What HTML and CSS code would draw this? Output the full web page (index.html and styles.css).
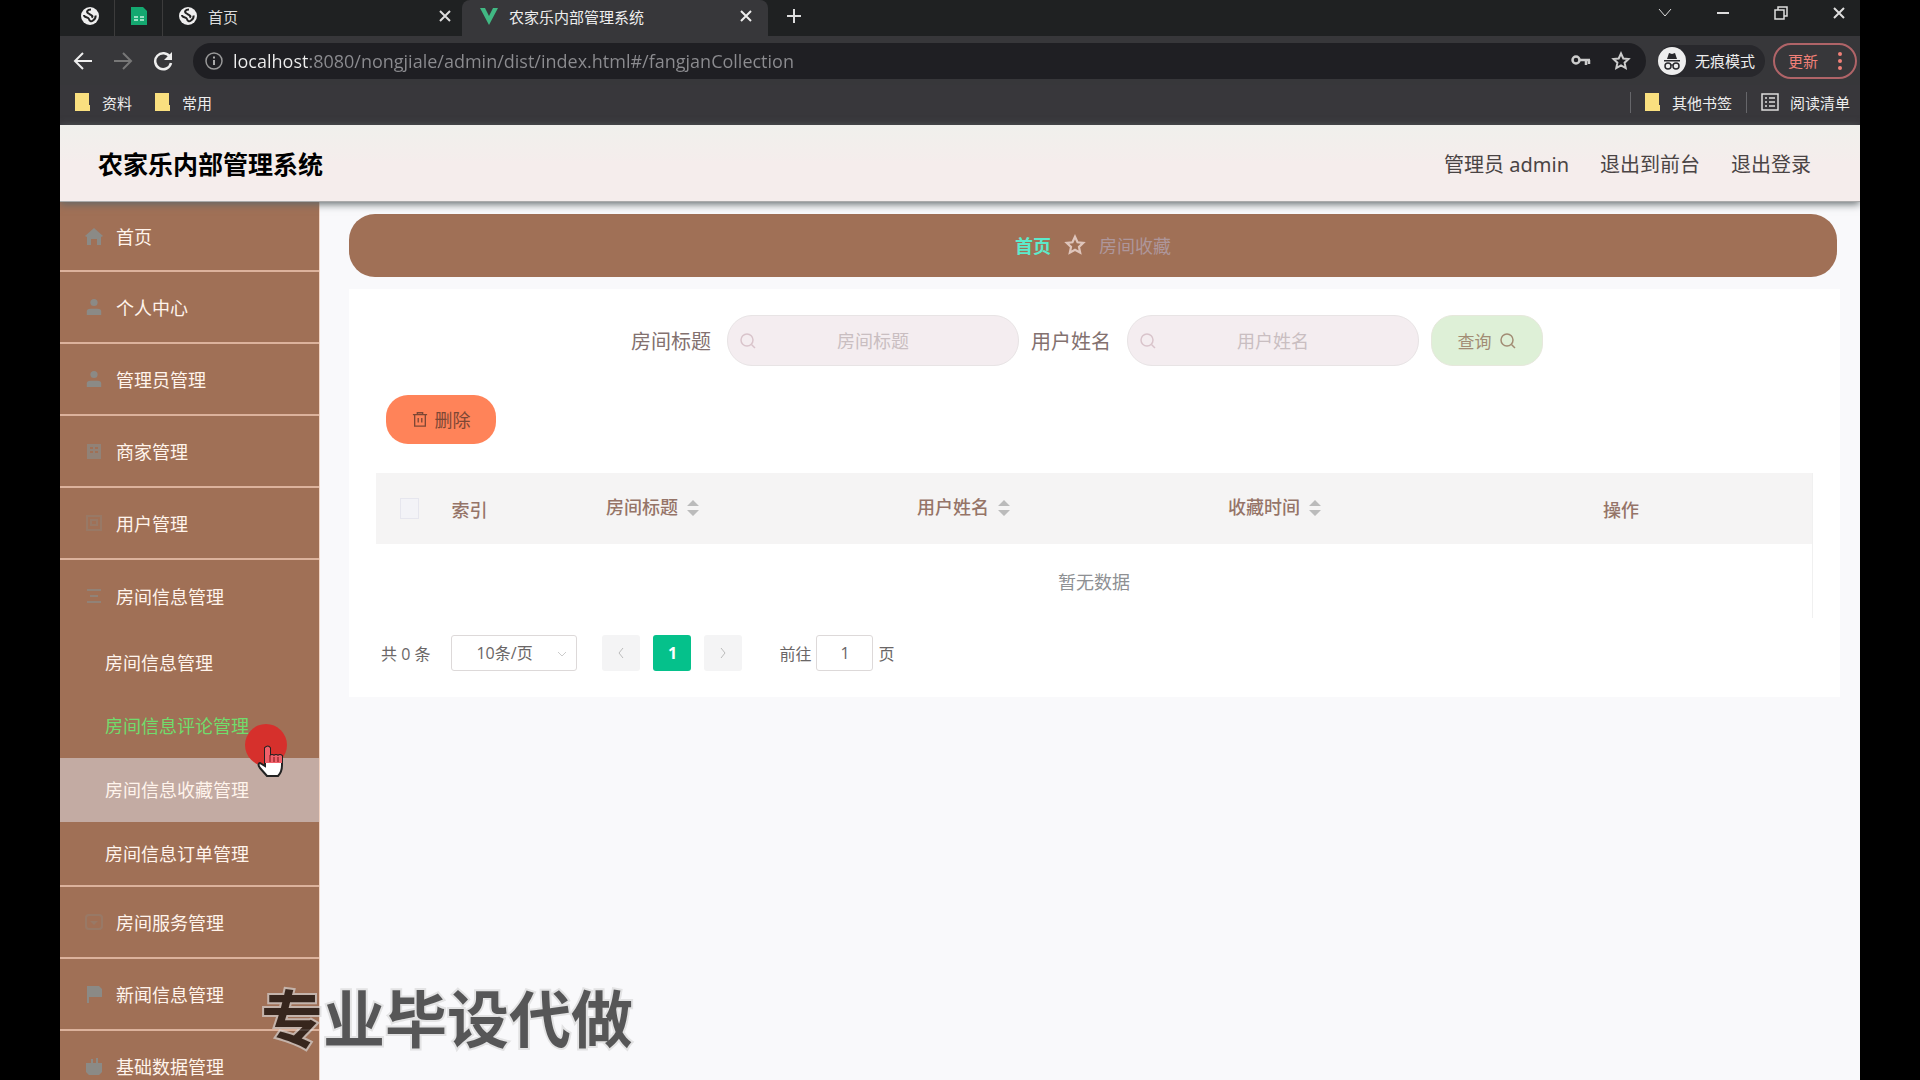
FILE: index.html
```html
<!DOCTYPE html>
<html lang="zh-CN">
<head>
<meta charset="utf-8">
<title>农家乐内部管理系统</title>
<link rel="stylesheet" href="styles.css">
</head>
<body>
<svg class="defs" aria-hidden="true">
  <symbol id="globe" viewBox="0 0 18 18"><circle cx="9" cy="9" r="9" fill="#eee"/><path d="M10 2.500C6 2.500 5 5 7.500 6.500S13 9 10.500 10.500M3 8c0 3 4 1.500 5 4 .500 2 2 3 4 1.500s3-3 2.500-5" fill="none" stroke="#222" stroke-width="2"/></symbol>
  <symbol id="cross" viewBox="0 0 14 14"><path d="M2 2l10 10M12 2L2 12" fill="none" stroke="currentColor" stroke-width="2"/></symbol>
  <symbol id="search" viewBox="0 0 18 18"><circle cx="8" cy="8" r="6" fill="none" stroke="currentColor" stroke-width="1.500"/><path d="M12.500 12.500L16 16" stroke="currentColor" stroke-width="1.500"/></symbol>
  <symbol id="star" viewBox="0 0 20 20"><path d="M10 2.500l2.300 5 5.200.600-3.900 3.600 1.100 5.300L10 14.300 5.300 17l1.100-5.300L2.500 8.100l5.200-.600z" fill="none" stroke="currentColor" stroke-width="2"/></symbol>
  <symbol id="user" viewBox="0 0 18 20"><circle cx="9" cy="5" r="4"/><path d="M1 19v-4q0-3 4-3h8q4 0 4 3v4z"/></symbol>
  <symbol id="folder" viewBox="0 0 15 18"><path d="M0 0h14v12h1v6H0z" fill="#f9df7f"/></symbol>
</svg>

<div class="window">
  <div class="tabs">
    <button class="tab pinned" aria-label="固定标签"><svg class="i18"><use href="#globe"/></svg></button>
    <button class="tab pinned" aria-label="表格"><svg class="i18" viewBox="0 0 18 18"><path d="M1 0h12l4 4v14H1z" fill="#14a870"/><path d="M4 10h4M10 10h4M4 13h4M10 13h4" stroke="#9be0c4" stroke-width="2"/></svg></button>
    <div class="tab inactive"><svg class="i18"><use href="#globe"/></svg><span class="tab-title">首页</span><button aria-label="关闭"><svg class="i14"><use href="#cross"/></svg></button></div>
    <div class="tab active"><svg class="i18" viewBox="0 0 18 18"><path d="M0 1h5l4 8 4-8h5L9 18z" fill="#41b883"/></svg><span class="tab-title">农家乐内部管理系统</span><button aria-label="关闭"><svg class="i14"><use href="#cross"/></svg></button></div>
    <button class="new-tab" aria-label="新标签"><svg class="i16" viewBox="0 0 16 16"><path d="M8 1v14M1 8h14" stroke="currentColor" stroke-width="2"/></svg></button>
    <div class="window-controls">
      <button aria-label="搜索标签"><svg class="i14" viewBox="0 0 14 14"><path d="M1 3l6 7 6-7" fill="none" stroke="currentColor"/></svg></button>
      <button aria-label="最小化"><svg class="i14" viewBox="0 0 14 14"><path d="M1 7h12" stroke="currentColor" stroke-width="2"/></svg></button>
      <button aria-label="还原"><svg class="i14" viewBox="0 0 14 14"><path d="M1 4h9v9H1zM4 4V1h9v9h-3" fill="none" stroke="currentColor" stroke-width="1.500"/></svg></button>
      <button aria-label="关闭窗口"><svg class="i14"><use href="#cross"/></svg></button>
    </div>
  </div>

  <div class="toolbar">
    <button aria-label="后退"><svg class="i20" viewBox="0 0 20 20"><path d="M19 10H2M10 2l-8 8 8 8" fill="none" stroke="#eee" stroke-width="2"/></svg></button>
    <button aria-label="前进"><svg class="i20" viewBox="0 0 20 20"><path d="M1 10h17M10 2l8 8-8 8" fill="none" stroke="#777" stroke-width="2"/></svg></button>
    <button aria-label="刷新"><svg class="i20" viewBox="0 0 20 20"><path d="M17 6a8 8 0 1 0 1 6" fill="none" stroke="#eee" stroke-width="2.500"/><path d="M19 1v8h-8z" fill="#eee"/></svg></button>
    <div class="address">
      <svg class="i18" viewBox="0 0 18 18"><circle cx="9" cy="9" r="8" fill="none" stroke="#999" stroke-width="1.500"/><path d="M9 8v5M9 4.500v2" stroke="#aaa" stroke-width="2"/></svg>
      <input type="text" aria-label="地址" value="localhost:8080/nongjiale/admin/dist/index.html#/fangjanCollection">
      <svg class="i20" viewBox="0 0 20 20"><circle cx="5" cy="9" r="3.500" fill="none" stroke="#ccc" stroke-width="2.500"/><path d="M8 9h11M15 9v5M18 9v4" fill="none" stroke="#ccc" stroke-width="2.500"/></svg>
      <svg class="i20 light"><use href="#star"/></svg>
    </div>
    <div class="incognito"><svg class="i28" viewBox="0 0 28 28"><circle cx="14" cy="14" r="14" fill="#eee"/><path d="M9 12l2-6 3 1 3-1 2 6zM6 13h16v1.500H6z" fill="#28282c"/><circle cx="10" cy="19" r="3" fill="none" stroke="#28282c" stroke-width="1.500"/><circle cx="18" cy="19" r="3" fill="none" stroke="#28282c" stroke-width="1.500"/><path d="M13 18h2" stroke="#28282c"/></svg>无痕模式</div>
    <button class="update">更新<svg class="dots" viewBox="0 0 4 18"><circle cx="2" cy="2" r="2"/><circle cx="2" cy="9" r="2"/><circle cx="2" cy="16" r="2"/></svg></button>
  </div>

  <nav class="bookmarks">
    <a href="#"><svg class="folder"><use href="#folder"/></svg>资料</a>
    <a href="#"><svg class="folder"><use href="#folder"/></svg>常用</a>
    <a href="#" class="divided push"><svg class="folder"><use href="#folder"/></svg>其他书签</a>
    <a href="#" class="divided list"><svg class="i18" viewBox="0 0 18 18"><path d="M1 1h16v16H1zM4 5h2M8 5h6M4 9h2M8 9h6M4 13h2M8 13h6" fill="none" stroke="#ddd" stroke-width="1.500"/></svg>阅读清单</a>
  </nav>

  <header class="header">
    <h1>农家乐内部管理系统</h1>
    <span>管理员 admin</span>
    <a href="#">退出到前台</a>
    <a href="#">退出登录</a>
  </header>

  <div class="body">
    <aside class="sidebar">
      <a href="#" class="item"><svg class="mi" viewBox="0 0 18 18"><path d="M9 1l9 8-2 1v8h-4v-6H6v6H2v-8L0 9z"/></svg>首页</a>
      <a href="#" class="item"><svg class="mi"><use href="#user"/></svg>个人中心</a>
      <a href="#" class="item"><svg class="mi"><use href="#user"/></svg>管理员管理</a>
      <a href="#" class="item"><svg class="mi dim" viewBox="0 0 18 18"><path d="M2 2h14v15H2z"/><path d="M5 6h3M10 6h3M5 10h3M10 10h3" stroke="#a07056" stroke-width="2"/></svg>商家管理</a>
      <a href="#" class="item"><svg class="mi faint" viewBox="0 0 18 18"><path d="M2 2h14v14H2zM6 6h6v5H6z" fill="none" stroke="#8b8a86" stroke-width="2"/></svg>用户管理</a>
      <a href="#" class="item open"><svg class="mi dim" viewBox="0 0 18 18"><path d="M2 3h14M5 9h8M2 15h14" fill="none" stroke="#8b8a86" stroke-width="2"/></svg>房间信息管理</a>
      <div class="submenu">
        <a href="#">房间信息管理</a>
        <a href="#" class="hover">房间信息评论管理</a>
        <a href="#" class="current">房间信息收藏管理</a>
        <a href="#">房间信息订单管理</a>
      </div>
      <a href="#" class="item"><svg class="mi faint" viewBox="0 0 18 18"><rect x="1" y="2" width="16" height="14" rx="3" fill="none" stroke="#8b8a86" stroke-width="2"/><path d="M5 8h8l-4 4z"/></svg>房间服务管理</a>
      <a href="#" class="item"><svg class="mi" viewBox="0 0 18 18"><path d="M2 1h12l3 3v8H4v6H2z"/></svg>新闻信息管理</a>
      <a href="#" class="item"><svg class="mi" viewBox="0 0 18 18"><path d="M1 6h5V2h2v4h3V1h2v5h4v9l-3 3H4l-3-3z"/></svg>基础数据管理</a>
    </aside>

    <main class="content">
      <nav class="breadcrumb"><a href="#">首页</a><svg class="i22"><use href="#star"/></svg><span>房间收藏</span></nav>

      <section class="card">
        <form class="search">
          <label for="room">房间标题</label>
          <div class="field"><svg class="i18"><use href="#search"/></svg><input id="room" type="text" placeholder="房间标题"></div>
          <label for="name">用户姓名</label>
          <div class="field"><svg class="i18"><use href="#search"/></svg><input id="name" type="text" placeholder="用户姓名"></div>
          <button type="button" class="query">查询<svg class="i18"><use href="#search"/></svg></button>
        </form>
        <button class="delete"><svg class="i16" viewBox="0 0 18 18"><path d="M1 4h16M6 4V2h6v2M3 4v13h12V4M7 8v5M11 8v5" fill="none" stroke="currentColor" stroke-width="1.500"/></svg>删除</button>

        <table>
          <colgroup><col class="c-check"><col class="c-index"><col class="c-data"><col class="c-data"><col class="c-data"><col></colgroup>
          <thead><tr>
            <th><input type="checkbox" aria-label="全选"></th>
            <th>索引</th>
            <th class="sortable">房间标题<svg class="sort" viewBox="0 0 12 16"><path d="M0 6l6-6 6 6zM0 10h12l-6 6z"/></svg></th>
            <th class="sortable">用户姓名<svg class="sort" viewBox="0 0 12 16"><path d="M0 6l6-6 6 6zM0 10h12l-6 6z"/></svg></th>
            <th class="sortable">收藏时间<svg class="sort" viewBox="0 0 12 16"><path d="M0 6l6-6 6 6zM0 10h12l-6 6z"/></svg></th>
            <th>操作</th>
          </tr></thead>
          <tbody><tr><td colspan="6">暂无数据</td></tr></tbody>
        </table>

        <div class="pager">
          <span>共 0 条</span>
          <div class="size"><select aria-label="每页条数"><option>10条/页</option></select><svg class="i10" viewBox="0 0 10 10"><path d="M1 3l4 4 4-4" fill="none" stroke="currentColor"/></svg></div>
          <div class="pages">
            <button aria-label="上一页"><svg class="i10" viewBox="0 0 10 10"><path d="M7 0L3 5l4 5" fill="none" stroke="currentColor"/></svg></button>
            <button class="on">1</button>
            <button aria-label="下一页"><svg class="i10" viewBox="0 0 10 10"><path d="M3 0l4 5-4 5" fill="none" stroke="currentColor"/></svg></button>
          </div>
          <label class="jump">前往<input type="text" value="1">页</label>
        </div>
      </section>
    </main>
  </div>

  <div class="watermark">专业毕设代做</div>
  <svg class="pointer" viewBox="0 0 48 54"><circle cx="21" cy="21" r="21" fill="#d6302c"/><path d="M20 24v18l-5-3q-3 1 0 5l7 8h11q4-4 4-11v-9q-2-2-4 0-2-2-4 0-2-2-4 0v-8q-2-3-5 0z" fill="#fff" stroke="#222" stroke-width="2"/><path d="M20 24q3-3 5 0v8q2-2 4 0 2-2 4 0 2-2 4 0v7H20z" fill="#f0606a"/><path d="M29 33v5M33 33v5M25 31v7" stroke="#7a1518" stroke-width="1"/></svg>
</div>
</body>
</html>
```

FILE: styles.css
```css
* { box-sizing: border-box; }
body {
  margin: 0;
  background: #000;
  font-family: "Open Sans", "Noto Sans CJK SC", sans-serif;
  font-size: 18px;
}
a { color: inherit; text-decoration: none; }
button { border: 0; padding: 0; background: none; color: inherit; font: inherit; display: flex; align-items: center; justify-content: center; }
input, select { font: inherit; }
svg { flex: none; display: block; }
.defs { position: absolute; width: 0; height: 0; }
.i10 { width: 10px; height: 10px; }
.i14 { width: 14px; height: 14px; }
.i16 { width: 16px; height: 16px; }
.i18 { width: 18px; height: 18px; }
.i20 { width: 20px; height: 20px; }
.i22 { width: 22px; height: 22px; }
.i28 { width: 28px; height: 28px; }

.window {
  position: relative;
  height: 100vh;
  margin: 0 60px;
  overflow: hidden;
  display: flex;
  flex-direction: column;
  background: #f9f9fb;
}

/* browser frame */
.tabs { display: flex; flex: none; height: 36px; background: #1f2122; color: #ddd; font-size: 15px; }
.tab { display: flex; align-items: center; height: 36px; padding-bottom: 4px; }
.tab-title { flex: 1; margin-left: 11px; }
.pinned { width: 48px; justify-content: center; }
.pinned + .tab { box-shadow: -1px 0 #3c3c3c; }
.tabs .pinned:first-child { padding-left: 5px; width: 55px; }
.inactive { width: 299px; padding-left: 16px; padding-right: 10px; }
.active { width: 306px; padding-left: 18px; padding-right: 15px; background: #37373a; color: #eee; border-radius: 8px 8px 0 0; }
.new-tab { width: 51px; padding-bottom: 4px; }
.window-controls { display: flex; gap: 44px; margin-left: auto; padding: 0 14px 10px 0; }

.toolbar { display: flex; flex: none; align-items: center; gap: 20px; height: 49px; padding: 0 3px 0 13px; background: #37373a; color: #eee; font-size: 15px; }
.address { display: flex; flex: 1; align-items: center; gap: 10px; height: 36px; padding: 0 15px 0 12px; border-radius: 18px; background: #1f1f23; }
.address input {
  flex: 1;
  min-width: 0;
  padding: 0;
  border: 0;
  outline: 0;
  font-size: 18px;
  color: #929296;
  -webkit-text-fill-color: transparent;
  background: linear-gradient(90deg, #eee 77px, #8c8c90 77px);
  -webkit-background-clip: text;
  background-clip: text;
}
.address svg:last-child { margin-left: 10px; }
.light { color: #ccc; }
.incognito { display: flex; align-items: center; gap: 9px; height: 32px; margin: 0 -12px 0 -8px; padding-right: 10px; border-radius: 16px; background: #28282c; }
.update { gap: 20px; width: 84px; height: 36px; border: 2px solid #b06468; border-radius: 18px; color: #f08078; }
.dots { width: 4px; height: 18px; fill: #f08078; }

.bookmarks { display: flex; flex: none; align-items: center; gap: 23px; height: 40px; padding: 0 10px 6px 15px; background: #38373b; color: #eee; font-size: 15px; }
.bookmarks a { display: flex; align-items: center; gap: 12px; }
.folder { width: 15px; height: 18px; }
.divided { border-left: 1px solid #66666a; padding-left: 14px; }
.bookmarks .push { margin-left: auto; }
.bookmarks .list { gap: 11px; margin-left: -9px; }

/* application */
.header {
  position: relative;
  display: flex;
  flex: none;
  align-items: center;
  gap: 31px;
  height: 77px;
  padding: 0 49px 0 38px;
  background: linear-gradient(#f0f0ec, #f5edec 50%);
  box-shadow: 0 2px 8px #60686a;
  border-bottom: 1px solid #aaa;
  color: #4a4444;
  font-size: 20px;
  font-family: "Noto Sans", "Noto Sans CJK SC", sans-serif;
}
.header h1 { margin: 0 auto 0 0; color: #000; font-size: 25px; }
.body { display: flex; flex: 1; min-height: 0; }
.sidebar { flex: none; width: 260px; border-right: 1px solid #f3d5c5; background: #a07056; color: #fff4ec; overflow: hidden; }
.item { display: flex; align-items: center; gap: 13px; height: 72px; padding-left: 25px; border-bottom: 2px solid #dcb29c; }
.item:first-child { height: 70px; }
.item.open { height: 71px; border-bottom: 0; }
.mi { width: 18px; height: 18px; fill: #8b8a86; }
.dim { opacity: .7; }
.faint { opacity: .35; }
.submenu { border-bottom: 2px solid #dcb29c; }
.submenu a { display: flex; align-items: center; height: 64px; padding: 0 0 2px 45px; }
.submenu a:first-child, .submenu a:last-child { height: 63px; }
.submenu .hover { color: #70dc6c; }
.submenu .current { background: #c3aba3; }

.content { flex: 1; padding: 12px 20px 0 29px; background: #f9f9fb; min-width: 0; }
.breadcrumb { display: flex; align-items: center; justify-content: center; gap: 13px; height: 63px; margin-right: 3px; padding-bottom: 2px; border-radius: 26px; background: #a07056; color: #ae969a; }
.breadcrumb a { color: #5ceacb; font-weight: bold; }
.breadcrumb svg { color: #dfc5bb; }
.card { display: flex; flex-direction: column; align-items: flex-start; margin-top: 12px; padding: 26px 27px; background: #fff; }
.search { display: flex; align-self: stretch; align-items: center; justify-content: center; height: 51px; padding-right: 15px; font-size: 20px; color: #83716f; }
.field { position: relative; width: 292px; margin: 0 12px 0 16px; font-size: 18px; color: #d9c4cb; }
.field svg { position: absolute; left: 12px; top: 17px; }
.field input { display: block; width: 100%; height: 51px; padding: 0 30px; border: 1px solid #e8e4e5; border-radius: 25px; background: #f4edf0; text-align: center; }
.field input::placeholder { color: #c9bec1; }
.query { gap: 7px; width: 112px; height: 51px; border: 1px solid #e6e8dc; border-radius: 22px; background: #def0d7; color: #a28c74; font-size: 17px; }
.delete { gap: 7px; width: 110px; height: 49px; margin: 29px 0 29px 10px; padding-bottom: 2px; border-radius: 22px; background: #ff8359; color: #7d4735; }

table { width: 100%; border-collapse: collapse; table-layout: fixed; border-right: 1px solid #f0f0f0; }
.c-check { width: 66px; }
.c-index { width: 55px; }
.c-data { width: 311px; }
th { height: 71px; padding: 0; background: #f5f4f4; color: #957468; font-weight: 500; }
th.sortable { padding-bottom: 5px; }
th input { appearance: none; display: block; width: 19px; height: 21px; margin: auto; border: 1px solid #e6e6ee; background: #f3f3f7; }
.sort { display: inline-block; width: 12px; height: 16px; margin-left: 9px; vertical-align: -2px; fill: #bbb; }
td { height: 74px; padding: 0; text-align: center; color: #8e9093; }

.pager { display: flex; align-items: center; height: 37px; margin-top: 16px; padding-left: 5px; color: #6a6666; font-size: 16px; }
.size { position: relative; margin-left: 21px; color: #ccc; }
.size svg { position: absolute; right: 10px; top: 14px; }
.size select { appearance: none; display: block; width: 126px; height: 36px; padding: 0 24px; border: 1px solid #ddd9d9; border-radius: 3px; background: #fff; color: #6a6666; }
.pages { display: flex; gap: 13px; margin: 0 37px 0 25px; }
.pages button { width: 38px; height: 36px; border-radius: 3px; background: #f4f4f5; color: #bbb; }
.pages .on { background: #05c18b; color: #fff; font-weight: bold; }
.jump { display: flex; align-items: center; gap: 5px; }
.jump input { width: 57px; height: 36px; border: 1px solid #ddd9d9; border-radius: 3px; background: #fff; color: #6a6666; text-align: center; }

/* overlays */
.watermark {
  position: absolute;
  left: 201px;
  bottom: 16px;
  color: #000;
  font-size: 62px;
  line-height: 90px;
  font-weight: bold;
  opacity: .65;
  -webkit-text-stroke: 4px #d8d8d8;
  paint-order: stroke fill;
}
.pointer { position: absolute; left: 185px; top: 724px; width: 48px; height: 54px; }
```
